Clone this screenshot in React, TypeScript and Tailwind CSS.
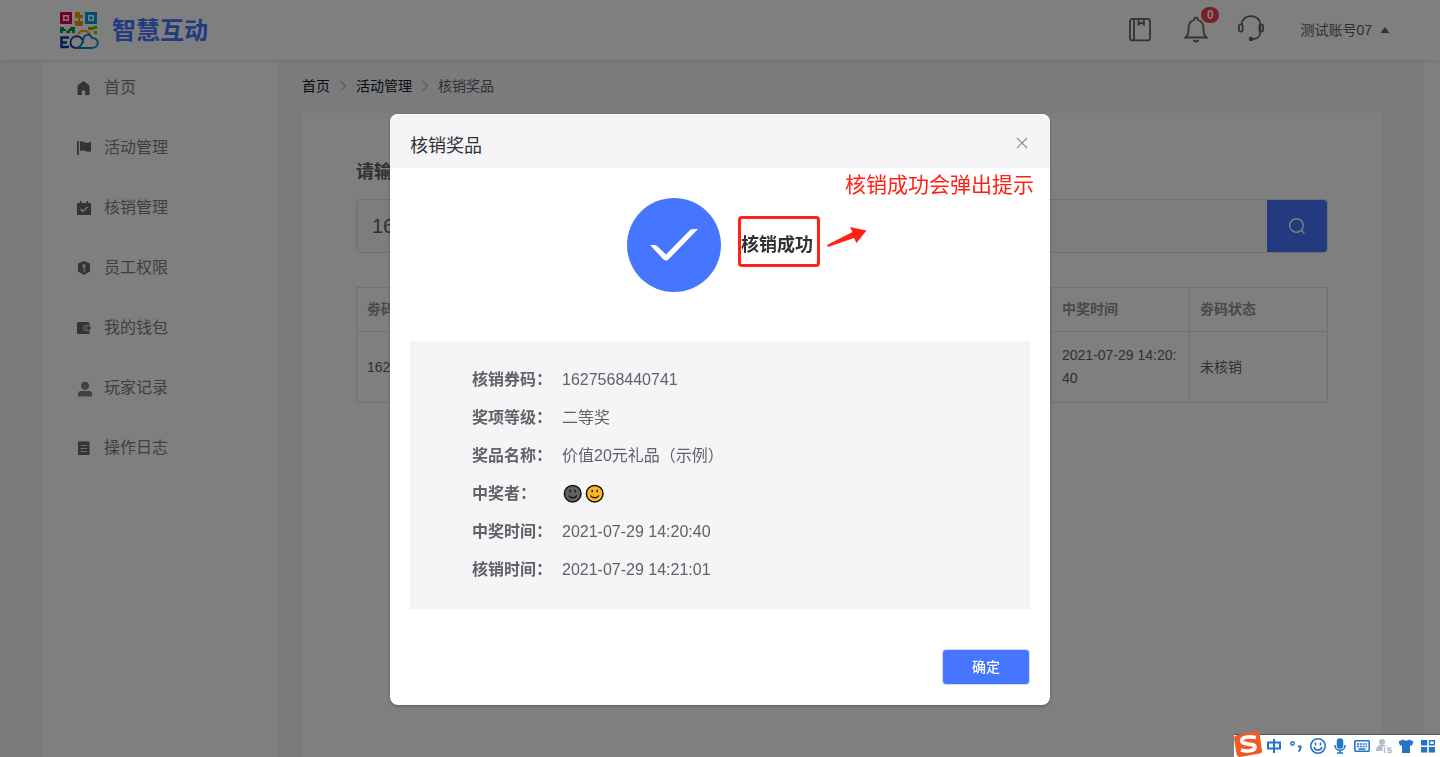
import type { ReactNode } from "react";

const nav: { label: string; icon: ReactNode }[] = [
  { label: "首页", icon: <path d="M7.500 1 1.500 5.500V15h4.300v-4.500h3.400V15h4.300V5.500z" /> },
  { label: "活动管理", icon: <path d="M1 1h1.800v14H1zM4 1.500c2.500-1.200 4.500 1.200 6.500 1.200 1.500 0 3-.5 4.500-1v9.500c-3 1.500-5-.2-7-.7L4 10.700z" /> },
  {
    label: "核销管理",
    icon: (
      <>
        <path d="M1 3h14v12H1zM4 1h1.500v2H4zM10.500 1H12v2h-1.500z" />
        <path d="m4.500 9 2.500 2.300 4.500-4.500" fill="none" stroke="#fff" strokeWidth="1.200" />
      </>
    ),
  },
  {
    label: "员工权限",
    icon: (
      <>
        <path d="M8 1 14 3.500v8L8 15l-6-3.500v-8z" />
        <circle cx="8" cy="6" r="2" fill="#d0d0d0" />
        <path d="M8 7.500V12.500M8 10.500h2" fill="none" stroke="#d0d0d0" strokeWidth="1.200" />
      </>
    ),
  },
  {
    label: "我的钱包",
    icon: (
      <>
        <path d="M2 2h10.500l1 1.500V14H1V3z" />
        <rect x="7.500" y="5.500" width="7.500" height="5" rx="2.500" stroke="#ddd" />
        <circle cx="10.500" cy="8" r="1" fill="none" stroke="#ddd" strokeWidth=".8" />
      </>
    ),
  },
  {
    label: "玩家记录",
    icon: <path fill="#808286" d="M9 1.700a4 4 0 1 1 0 8 4 4 0 0 1 0-8M2 16.500V14c0-2 1.500-3 3-3h8c2 0 3 1 3 3v2.500z" />,
  },
  {
    label: "操作日志",
    icon: (
      <>
        <path d="M2 1.500h11.500V15H2z" />
        <path d="M4.500 5.500H11M4.500 8.500H11M4.500 11.500H11" stroke="#ddd" strokeWidth="1.200" />
      </>
    ),
  },
];

const details = [
  ["核销券码：", "1627568440741"],
  ["奖项等级：", "二等奖"],
  ["奖品名称：", "价值20元礼品（示例）"],
  ["中奖者：", ""],
  ["中奖时间：", "2021-07-29 14:20:40"],
  ["核销时间：", "2021-07-29 14:21:01"],
];

function Logo() {
  return (
    <svg className="size-10" viewBox="0 -2 40 40" fill="none" aria-hidden="true">
      <rect x="1.500" y="1.500" width="9" height="9" stroke="#e3004f" strokeWidth="3" />
      <rect x="4.500" y="4.500" width="3" height="3" fill="#e3004f" />
      <rect x="26.500" y="1.500" width="9" height="9" stroke="#009fd9" strokeWidth="3" />
      <rect x="29.500" y="4.500" width="3" height="3" fill="#009fd9" />
      <path d="M15 0h5v3h3v3h-3v3h3v5h-8v-3h-1V9h4V6h-3z" fill="#f39a00" />
      <path d="M0 15h4v2h2v2h2v-2h2v-2h5v6h-3v-2h-2v2H6v-2H3v2H0z" fill="#149447" />
      <path d="M28 15h5v-1h4v3h-3v1h-6zM34 19h3v3h-3z" fill="#8fb900" />
      <path d="M18 22.500c2-5 9-5 12 0" stroke="#f5a400" strokeWidth="1.800" />
      <path d="M9 25.500H1.500v9.500H9M2 30.500h5" stroke="#06439c" strokeWidth="2.500" />
      <path d="M23 31c0-9-12.500-9-12.500 0 0 5 6 6 9 4" stroke="#0b3f91" strokeWidth="1.800" />
      <path d="M16 36h15c9 0 9-10 1-10-2-5-8-4-9 2-1 5-3 8-7 8" stroke="#0784bf" strokeWidth="1.800" />
    </svg>
  );
}

function Face({ fill }: { fill: string }) {
  return (
    <svg className="size-5" viewBox="0 0 20 20" role="img" aria-label="表情">
      <circle cx="10.700" cy="9.700" r="8.300" fill={fill} stroke="#111" strokeWidth="1.500" />
      <path d="M8.200 5.800v2.400M13.200 5.800v2.400M6.500 11.500c2 3 6.400 3 8.400 0" fill="none" stroke="#111" strokeWidth="1.300" />
    </svg>
  );
}

function Crumb({ children, last = false }: { children: string; last?: boolean }) {
  return (
    <li className="flex items-center">
      {last ? (
        <span className="text-[#606266]">{children}</span>
      ) : (
        <>
          <a href="#" className="text-[#17181a]">{children}</a>
          <svg className="mx-2 size-2.5" viewBox="0 0 10 10" fill="none" stroke="#b8bbc2" strokeWidth="1.200" aria-hidden="true">
            <path d="m2.500 0 5 5-5 5" />
          </svg>
        </>
      )}
    </li>
  );
}

function InputToolbar() {
  return (
    <div className="fixed right-0 bottom-0 z-30 flex h-[23px] w-[206px] items-center gap-1.5 border-t border-[#555] bg-white pr-1 pl-8 text-[#2374c6]">
      <svg className="absolute -top-1 left-0 h-[26px] w-7" viewBox="0 0 28 26" aria-hidden="true">
        <path d="M3 4 23 0q2 0 2.500 2L28 20q0 2-2 2.500L6 26q-3 0-3.500-3L0 7q0-2 3-3" fill="#f15a22" />
        <path d="M22 6.500C14 5 7 6 8 10.500c1 4 13 1 13 5.500 0 4-8 5-14 3" fill="none" stroke="#fff" strokeWidth="3.800" />
      </svg>
      <svg className="size-4" viewBox="0 0 16 16" fill="none" stroke="currentColor" strokeWidth="2" aria-hidden="true">
        <path d="M2 4.500h12v6H2zM8 1v14" />
      </svg>
      <svg className="size-4" viewBox="0 0 16 16" fill="none" stroke="currentColor" strokeWidth="1.500" aria-hidden="true">
        <circle cx="4.500" cy="5.500" r="1.700" /><path d="M10 8.500h2.500V10c0 1.500-.5 2.500-2 3.500" strokeWidth="2" />
      </svg>
      <svg className="size-4" viewBox="0 0 16 16" fill="none" stroke="currentColor" strokeWidth="1.600" aria-hidden="true">
        <circle cx="8" cy="8" r="7.200" /><path d="M5.500 4.500v3M10.500 4.500v3M4 9c1 4 7 4 8 0" />
      </svg>
      <svg className="size-4" viewBox="0 0 16 16" fill="none" stroke="currentColor" strokeWidth="1.500" aria-hidden="true">
        <rect x="5.500" y="1" width="5" height="9" rx="2.500" fill="currentColor" /><path d="M3 7c0 7 10 7 10 0M8 12v3M5 15h6" />
      </svg>
      <svg className="size-4" viewBox="0 0 16 16" fill="none" stroke="currentColor" strokeWidth="1.600" aria-hidden="true">
        <rect x=".8" y="2.800" width="14.400" height="10.400" rx="1" /><path d="M3 6h10M3 8.500h10" strokeDasharray="2 .8" /><path d="M4.500 11h7" />
      </svg>
      <svg className="size-4" viewBox="0 0 16 16" fill="#b3bdce" aria-hidden="true">
        <circle cx="6" cy="4" r="3" /><path d="M0 13c0-5 3-6 6-6 2 0 4 0 5 1.500H6.500V13z" /><path d="M8.500 9.500v5.500M15.500 10.200H12v2h2.500c1 0 1 2.300 0 2.300H11.500" fill="none" stroke="#b3bdce" strokeWidth="1.400" />
      </svg>
      <svg className="size-4" viewBox="0 0 16 16" fill="currentColor" aria-hidden="true">
        <path d="M5 1.500c1 1.500 5 1.500 6 0l4.500 2-1.500 4h-2v7.500H4V7.500H2l-1.500-4z" />
      </svg>
      <svg className="size-4" viewBox="0 0 16 16" fill="currentColor" aria-hidden="true">
        <path d="M1 2h6.200v5.500H1zM1 9h6.200v5.500H1zM8.800 9H15v5.500H8.800z" /><path d="M9.500 2.700h4.800v4.100H9.500z" fill="none" stroke="currentColor" strokeWidth="1.400" />
      </svg>
    </div>
  );
}

export default function App() {
  return (
    <div className="flex h-screen flex-col overflow-hidden bg-[#f4f6fa] font-['Liberation_Sans','Noto_Sans_CJK_SC',sans-serif] text-[#606266]">
      <header className="relative z-10 flex h-[60px] shrink-0 items-center bg-white pr-[50px] pl-[60px] shadow-[0_1px_4px_rgba(0,0,0,0.1)]">
        <a href="#" className="flex items-center gap-3">
          <Logo />
          <span className="pt-0.5 text-2xl font-bold text-[#4675ff]">智慧互动</span>
        </a>
        <div className="ml-auto flex items-center">
          <button aria-label="手册" className="mr-8">
            <svg className="block size-6" viewBox="0 0 24 24" fill="none" stroke="#666" strokeWidth="1.800">
              <rect x="2" y="0.900" width="20" height="21.500" rx="2.500" /><path d="M6 1v21.500M10.500 1v5.500l2.700-2 2.700 2V1" />
            </svg>
          </button>
          <button aria-label="通知" className="relative mr-[30px]">
            <svg className="block h-7 w-6" viewBox="0 0 24 28" fill="none" stroke="#666" strokeWidth="1.800">
              <path d="M1.500 21.500h21c-2.700-2.500-3-4-3-9 0-5-2.500-7.500-5.500-8.500 0-3-4-3-4 0-3 1-5.500 3.500-5.500 8.500 0 5-.3 6.500-3 9zM9.500 24c1 2 4 2 5 0" />
            </svg>
            <span className="absolute -top-[9px] left-[17px] flex h-4 w-[18px] items-center justify-center rounded-full bg-[#f04048] text-xs font-bold text-white">0</span>
          </button>
          <button aria-label="客服" className="mr-9 mb-1">
            <svg className="block size-[26px]" viewBox="0 0 28 28" fill="none" stroke="#666" strokeWidth="1.900">
              <path d="M4 10.500C4-2 24-2 24 10.500v8c0 4-3 7.500-9 7.500" /><rect x="1" y="10" width="4" height="8" rx="2" /><rect x="23" y="10" width="4" height="8" rx="2" /><circle cx="14" cy="26" r="1.500" fill="#666" />
            </svg>
          </button>
          <button className="flex items-center gap-2 text-sm">
            测试账号07
            <svg className="h-1.5 w-2.5" viewBox="0 0 10 6" fill="#606266" aria-hidden="true"><path d="m.5 6 4.500-6 4.500 6z" /></svg>
          </button>
        </div>
      </header>

      <div className="flex min-h-0 flex-1 pl-[42px]">
        <nav className="w-[236px] shrink-0 bg-white">
          <ul>
            {nav.map((item) => (
              <li key={item.label} className="mb-[5px]">
                <a href="#" className="flex h-[55px] items-center gap-3 pl-[34px] text-base text-[#7c7f84]">
                  <svg className="size-4 text-[#66686c]" viewBox="0 0 16 16" overflow="visible" fill="currentColor" aria-hidden="true">{item.icon}</svg>
                  {item.label}
                </a>
              </li>
            ))}
          </ul>
        </nav>

        <main className="flex min-w-0 flex-1 flex-col px-6 pr-[41px]">
          <nav aria-label="面包屑" className="flex h-[53px] shrink-0 items-center pb-0.5 text-sm">
            <ol className="flex">
              <Crumb>首页</Crumb>
              <Crumb>活动管理</Crumb>
              <Crumb last>核销奖品</Crumb>
            </ol>
          </nav>
          <section className="flex-1 bg-white px-[54px] pt-[45px]">
            <label htmlFor="code" className="block text-lg font-bold">请输入券码</label>
            <div className="mt-[13px] flex h-[54px] rounded border border-[#dcdfe6] bg-[#fafafa]">
              <input id="code" defaultValue="1627568440741" className="min-w-0 flex-1 px-[15px] text-xl" />
              <button aria-label="查询" className="flex w-[60px] items-center justify-center rounded-r bg-[#4675ff]">
                <svg className="size-4" viewBox="0 0 16 16" fill="none" stroke="#fff" strokeWidth="1.400"><circle cx="7.500" cy="7.500" r="6.800" /><path d="m12.300 12.300 3 3" /></svg>
              </button>
            </div>
            <table className="mt-[34px] w-full table-fixed border-collapse border border-[#dfe3eb] text-left text-sm">
              <thead>
                <tr className="h-11 text-[#909399]">
                  <th className="border border-[#dfe3eb] px-2.5 pb-0.5">劵码</th>
                  <th className="w-[138px] border border-[#dfe3eb] px-2.5 pb-0.5">中奖时间</th>
                  <th className="w-[138px] border border-[#dfe3eb] px-2.5 pb-0.5">劵码状态</th>
                </tr>
              </thead>
              <tbody>
                <tr className="h-[71px] leading-[23px]">
                  <td className="border border-[#dfe3eb] px-2.5">1627568440741</td>
                  <td className="border border-[#dfe3eb] px-2.5 break-all">2021-07-29 14:20:40</td>
                  <td className="border border-[#dfe3eb] px-2.5">未核销</td>
                </tr>
              </tbody>
            </table>
          </section>
        </main>
        <div className="w-[17px] shrink-0 bg-white" />
      </div>

      <div className="fixed inset-0 z-20 flex items-start justify-center bg-black/50 pt-[114px]">
        <div role="dialog" aria-modal="true" aria-labelledby="dialog-title" className="w-[660px] overflow-hidden rounded-lg bg-white shadow-[0_1px_3px_rgba(0,0,0,0.3)]">
          <header className="flex h-[54px] items-center justify-between bg-[#f5f5f8] px-5 pt-2.5">
            <h2 id="dialog-title" className="text-lg text-[#303133]">核销奖品</h2>
            <button aria-label="关闭" className="mb-1.5 p-0.5">
              <svg className="size-3" viewBox="0 0 12 12" fill="none" stroke="#909399" strokeWidth="1.200"><path d="m1 1 10 10M11 1 1 11" /></svg>
            </button>
          </header>
          <div className="relative px-5 pt-[30px] pb-5">
            <p className="absolute top-px right-4 text-[21px] text-[#ff2114]">核销成功会弹出提示</p>
            <div className="flex items-center pl-[217px]">
              <svg className="size-[94px]" viewBox="0 0 94 94" aria-hidden="true">
                <circle cx="47" cy="47" r="47" fill="#4675ff" />
                <path d="M23 47h4.500q1.500 0 2.500 1l9 8.500L62 33q2-2 4-2h5L42 61q-3 3-6 0z" fill="#fff" />
              </svg>
              <strong className="-mt-2 ml-[17px] flex h-[51px] w-[82px] items-center rounded border-3 border-[#ff2114] pt-2 text-lg text-[#303133]">核销成功</strong>
              <svg className="-mt-4 ml-1.5 h-5 w-[41px]" viewBox="0 0 41 20" fill="#ff2114" aria-hidden="true">
                <path d="M1 18 26.500 5 24 0l16.500 3.500L30.500 16 28 11 2 20z" />
              </svg>
            </div>
            <dl className="mt-[49px] bg-[#f5f5f8] px-[62px] py-5 text-base">
              {details.map(([label, value]) => (
                <div key={label} className="flex h-[38px] items-center">
                  <dt className="w-[90px] font-bold">{label}</dt>
                  <dd className="flex items-center gap-0.5">
                    {value || (<><Face fill="#606266" /><Face fill="#fdb827" /></>)}
                  </dd>
                </div>
              ))}
            </dl>
            <div className="mt-10 flex justify-end">
              <button className="h-9 w-22 rounded border border-[#d5dcf0] bg-[#4675ff] text-sm font-medium text-white">确定</button>
            </div>
          </div>
        </div>
      </div>
      <InputToolbar />
    </div>
  );
}
